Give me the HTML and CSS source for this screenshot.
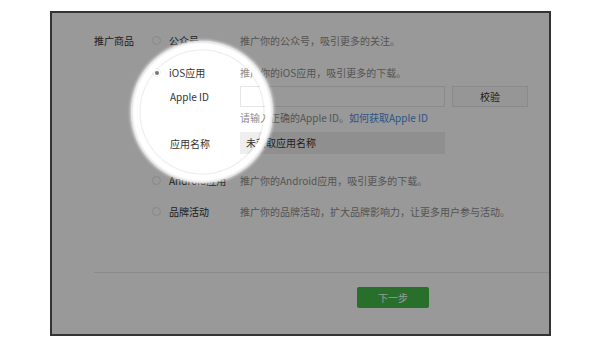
FILE: index.html
```html
<!DOCTYPE html>
<html lang="zh-CN">
<head>
    <meta charset="UTF-8">
    <title>推广商品 - 引导</title>
    <link rel="stylesheet" href="styles.css">
</head>
<body>
    <div class="panel">
        <div class="form">
            <div class="row">
                <div class="label">推广商品</div>
                <div class="opt"><span class="radio"></span>公众号</div>
                <div class="desc">推广你的公众号，吸引更多的关注。</div>
            </div>
            <div class="row row-ios">
                <div class="label"></div>
                <div class="opt"><span class="radio checked"></span>iOS应用</div>
                <div class="desc">推广你的iOS应用，吸引更多的下载。</div>
            </div>
            <div class="sub sub-id">
                <div class="sub-label">Apple ID</div>
                <input class="input" type="text">
                <button class="check">校验</button>
            </div>
            <div class="hint">请输入正确的Apple ID。<a href="#" class="link">如何获取Apple ID</a></div>
            <div class="sub sub-name">
                <div class="sub-label">应用名称</div>
                <div class="field">未获取应用名称</div>
            </div>
            <div class="row row-android">
                <div class="label"></div>
                <div class="opt"><span class="radio"></span>Android应用</div>
                <div class="desc">推广你的Android应用，吸引更多的下载。</div>
            </div>
            <div class="row row-brand">
                <div class="label"></div>
                <div class="opt"><span class="radio"></span>品牌活动</div>
                <div class="desc">推广你的品牌活动，扩大品牌影响力，让更多用户参与活动。</div>
            </div>
            <div class="divider"></div>
            <div class="actions">
                <button class="next">下一步</button>
            </div>
        </div>
        <!-- spotlight over the iOS option -->
        <div class="spot"></div>
    </div>
</body>
</html>
```

FILE: styles.css
```css
body {
    margin: 0;
    padding-top: 11px;
    background: #fff;
    font-family: "Noto Sans CJK SC", "Noto Sans", sans-serif;
    font-size: 10px;
    color: #333;
}
.panel {
    position: relative;
    overflow: hidden;
    margin-left: 50px;
    width: 497px;
    height: 321px;
    border: 2px solid #333;
    background: #fff;
}
.form {
    padding: 12px 0 0 42px;
}
.row {
    display: flex;
    align-items: center;
    height: 30px;
}
.row-ios {
    margin-top: 2px;
}
.row-android {
    margin-top: 11px;
}
.row-brand {
    margin-top: 1px;
}
.label {
    width: 59px;
}
.opt {
    width: 87px;
    display: flex;
    align-items: center;
}
.radio {
    width: 9px;
    height: 9px;
    border: 1px solid #e2e2e2;
    border-radius: 50%;
    box-sizing: border-box;
    margin: 0 7px 0 0;
    position: relative;
    left: -1px;
}
.radio.checked {
    border-color: #f0f0f0;
}
.radio.checked::after {
    content: "";
    position: absolute;
    left: 2px;
    top: 2px;
    width: 4px;
    height: 4px;
    border-radius: 50%;
    background: #777;
}
.desc {
    color: #8d8d8d;
}
.sub {
    display: flex;
    align-items: center;
    margin-left: 76px;
}
.sub-id {
    height: 21px;
    margin-top: -1px;
}
.sub-name {
    height: 22px;
    margin-top: 7px;
}
.sub-label {
    width: 70px;
}
.input {
    width: 205px;
    height: 21px;
    box-sizing: border-box;
    border: 1px solid #e7e7e7;
    margin: 0;
    padding: 0 6px;
    background: #fff;
}
.check {
    width: 76px;
    height: 21px;
    margin-left: 7px;
    border: 1px solid #e7e7e7;
    background: #fbfbfb;
    font-family: inherit;
    font-size: 10px;
    color: #333;
    padding: 0;
}
.hint {
    margin: 4px 0 0 146px;
    height: 14px;
    line-height: 14px;
    color: #8d8d8d;
}
.link {
    color: #4a8fe0;
    text-decoration: none;
}
.field {
    width: 205px;
    height: 22px;
    line-height: 22px;
    box-sizing: border-box;
    padding-left: 6px;
    background: #eee;
}
.divider {
    margin-top: 46px;
    height: 1px;
    background: #e7e7e7;
}
.actions {
    padding: 14px 0 0 263px;
}
.next {
    width: 72px;
    height: 21px;
    border: none;
    border-radius: 2px;
    background: #45b94a;
    color: #fff;
    font-family: inherit;
    font-size: 10px;
    padding: 0;
}
.spot {
    position: absolute;
    left: 79px;
    top: 28px;
    width: 142px;
    height: 142px;
    border-radius: 50%;
    background: radial-gradient(circle closest-side, rgba(255,255,255,0) 61px, rgba(0,0,0,.08) 62px, rgba(255,255,255,0) 63px, #fff 64px, #fff 68px, #ddd 71px);
    box-shadow: 0 0 3px 1px rgba(255,255,255,.7), 0 0 0 600px rgba(0,0,0,.4);
}
```
